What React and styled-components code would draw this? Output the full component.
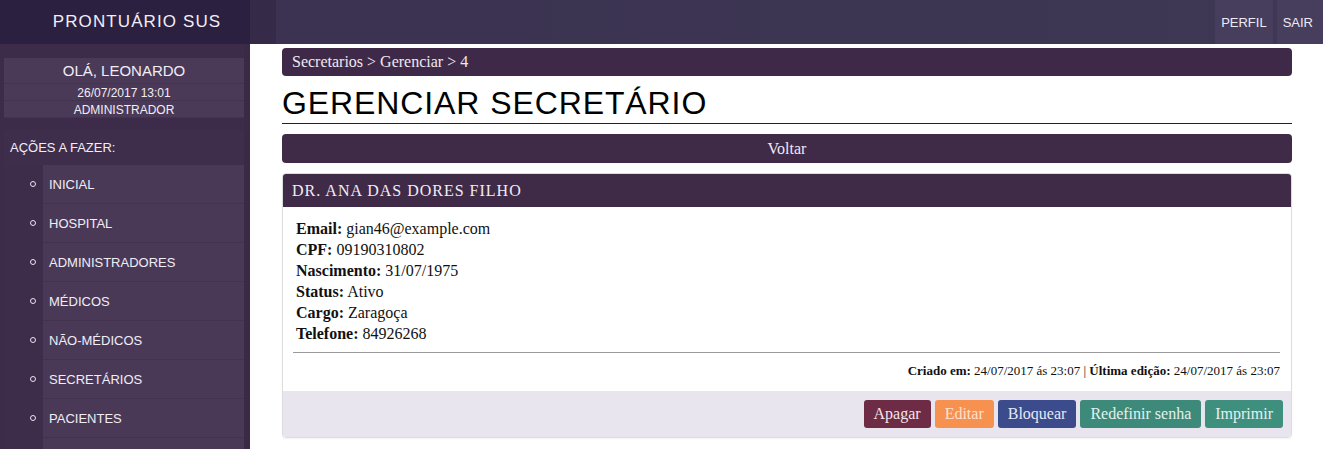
import React from 'react';
import styled, { createGlobalStyle } from 'styled-components';

const GlobalStyle = createGlobalStyle`
  html, body {
    margin: 0;
    padding: 0;
    background: #fff;
    overflow: hidden;
  }
  body {
    font-family: 'Liberation Serif', 'Times New Roman', serif;
  }
`;

const menu = [
  'INICIAL',
  'HOSPITAL',
  'ADMINISTRADORES',
  'MÉDICOS',
  'NÃO-MÉDICOS',
  'SECRETÁRIOS',
  'PACIENTES',
];

const fields = [
  ['Email:', 'gian46@example.com'],
  ['CPF:', '09190310802'],
  ['Nascimento:', '31/07/1975'],
  ['Status:', 'Ativo'],
  ['Cargo:', 'Zaragoça'],
  ['Telefone:', '84926268'],
];

const actions = [
  { label: 'Apagar', bg: '#6e2b45', fg: '#f1e6ea' },
  { label: 'Editar', bg: '#f6914f', fg: '#fde2cf' },
  { label: 'Bloquear', bg: '#3b4b8b', fg: '#e6e9f5' },
  { label: 'Redefinir senha', bg: '#3d8a7a', fg: '#e3f1ee' },
  { label: 'Imprimir', bg: '#3f8f7f', fg: '#e3f1ee' },
];

const App = () => {
  return (
    <Page>
      <GlobalStyle />
      <TopBar>
        <Brand>PRONTUÁRIO SUS</Brand>
        <Nav>
          <NavLink>PERFIL</NavLink>
          <NavLink $last>SAIR</NavLink>
        </Nav>
      </TopBar>
      <Body>
        <Sidebar>
          <UserBox>
            <UserRow $big>OLÁ, LEONARDO</UserRow>
            <UserRow>26/07/2017 13:01</UserRow>
            <UserRow>ADMINISTRADOR</UserRow>
          </UserBox>
          <Actions>
            <ActionsTitle>AÇÕES A FAZER:</ActionsTitle>
            <MenuList>
              {menu.map((item) => (
                <MenuItem key={item}>
                  <Bullet />
                  <MenuLabel>{item}</MenuLabel>
                </MenuItem>
              ))}
              {/* next row only starts at the bottom edge */}
              <MenuItem />
            </MenuList>
          </Actions>
        </Sidebar>
        <Main>
          <Breadcrumb>Secretarios &gt; Gerenciar &gt; 4</Breadcrumb>
          <Title>GERENCIAR SECRETÁRIO</Title>
          <BackButton>Voltar</BackButton>
          <Card>
            <CardHeader>DR. ANA DAS DORES FILHO</CardHeader>
            <CardBody>
              {fields.map(([k, v]) => (
                <Field key={k}>
                  <b>{k}</b> {v}
                </Field>
              ))}
              <Rule />
              <Meta>
                <b>Criado em:</b> 24/07/2017 ás 23:07 | <b>Última edição:</b> 24/07/2017 ás 23:07
              </Meta>
            </CardBody>
            <CardFooter>
              {actions.map((a) => (
                <ActionButton key={a.label} $bg={a.bg} $fg={a.fg}>
                  {a.label}
                </ActionButton>
              ))}
            </CardFooter>
          </Card>
        </Main>
      </Body>
    </Page>
  );
};

export default App;

const Page = styled.div`
  width: 1323px;
  height: 449px;
  display: flex;
  flex-direction: column;
  overflow: hidden;
`;

const TopBar = styled.header`
  height: 44px;
  display: flex;
  flex-shrink: 0;
  background: linear-gradient(to right, #3a3150, #3e3854);
`;

const Brand = styled.div`
  width: 250px;
  display: flex;
  align-items: center;
  justify-content: center;
  background: #2b2040;
  color: #f2eef6;
  font-family: 'Liberation Sans', Arial, sans-serif;
  font-size: 17px;
  letter-spacing: 1.1px;
  padding-left: 24px;
  box-sizing: border-box;
`;

const Nav = styled.nav`
  flex: 1;
  display: flex;
  justify-content: flex-end;
  gap: 4px;
  border-left: 26px solid #352b48;
`;

const NavLink = styled.div`
  display: flex;
  align-items: center;
  padding: 0 ${(p) => (p.$last ? '10px' : '6px')} 0 6px;
  background: #463e5c;
  color: #eeeaf4;
  font-family: 'Liberation Sans', Arial, sans-serif;
  font-size: 13px;
`;

const Body = styled.div`
  flex: 1;
  display: flex;
  min-height: 0;
`;

const Sidebar = styled.aside`
  width: 250px;
  flex-shrink: 0;
  box-sizing: border-box;
  background: #3d2b4a;
  border-right: 6px solid #3a2947;
  padding: 14px 0 0 4px;
  display: flex;
  flex-direction: column;
  gap: 12px;
  font-family: 'Liberation Sans', Arial, sans-serif;
  color: #f1edf5;
`;

const UserBox = styled.div`
  display: flex;
  flex-direction: column;
  text-align: center;
`;

const UserRow = styled.div`
  background: #4a3a57;
  border-bottom: 1px solid #433250;
  font-size: ${(p) => (p.$big ? '15px' : '12px')};
  height: ${(p) => (p.$big ? '25px' : '16px')};
  line-height: ${(p) => (p.$big ? '26px' : '18px')};
`;

const Actions = styled.div`
  display: flex;
  flex-direction: column;
  background: #3f2d4c;
`;

const ActionsTitle = styled.div`
  height: 35px;
  display: flex;
  align-items: center;
  padding-left: 6px;
  font-size: 13px;
`;

const MenuList = styled.ul`
  list-style: none;
  margin: 0;
  padding: 0 0 0 39px;
  background: #3e2c4b;
`;

const MenuItem = styled.li`
  position: relative;
  height: 38px;
  display: flex;
  align-items: center;
  background: #493957;
  border-bottom: 1px solid #423250;
`;

const Bullet = styled.span`
  position: absolute;
  left: -13px;
  top: 16px;
  width: 4px;
  height: 4px;
  border: 1px solid #e9e4ee;
  border-radius: 50%;
`;

const MenuLabel = styled.span`
  padding-left: 6px;
  font-size: 13px;
`;

const Main = styled.main`
  flex: 1;
  padding: 4px 31px 0 32px;
  display: flex;
  flex-direction: column;
  min-width: 0;
`;

const Breadcrumb = styled.div`
  height: 28px;
  line-height: 27px;
  background: #3e2a48;
  border-radius: 4px;
  padding-left: 10px;
  color: #efe9f2;
  font-size: 16px;
`;

const Title = styled.h1`
  margin: 9px 0 0;
  padding-bottom: 1px;
  border-bottom: 1px solid #222;
  font-family: 'Liberation Sans', Arial, sans-serif;
  font-weight: normal;
  font-size: 32px;
  line-height: 37px;
  letter-spacing: 0.9px;
  color: #000;
`;

const BackButton = styled.div`
  margin-top: 10px;
  height: 29px;
  line-height: 29px;
  background: #3f2a48;
  border-radius: 4px;
  text-align: center;
  color: #efe9f2;
  font-size: 16px;
`;

const Card = styled.section`
  margin-top: 10px;
  border: 1px solid #ddd;
  border-radius: 4px;
  overflow: hidden;
  box-shadow: 0 1px 2px rgba(0, 0, 0, 0.05);
`;

const CardHeader = styled.div`
  height: 33px;
  line-height: 33px;
  background: #3f2a48;
  color: #f2edf5;
  padding-left: 9px;
  font-size: 16px;
  letter-spacing: 1px;
`;

const CardBody = styled.div`
  padding: 11px 11px 12px 10px;
  color: #111;
`;

const Field = styled.div`
  font-size: 16px;
  line-height: 21px;
  padding-left: 3px;
`;

const Rule = styled.hr`
  margin: 8px 0 0;
  border: 0;
  border-top: 1px solid #999;
  height: 0;
`;

const Meta = styled.div`
  margin-top: 10px;
  text-align: right;
  font-size: 13px;
  line-height: 16px;
`;

const CardFooter = styled.div`
  background: #e9e5ef;
  padding: 9px 8px 9px;
  display: flex;
  justify-content: flex-end;
  gap: 4px;
`;

const ActionButton = styled.button`
  font-family: 'Liberation Serif', 'Times New Roman', serif;
  font-size: 16px;
  height: 28px;
  padding: 0 10px;
  border: 0;
  border-radius: 3px;
  background: ${(p) => p.$bg};
  color: ${(p) => p.$fg};
`;
